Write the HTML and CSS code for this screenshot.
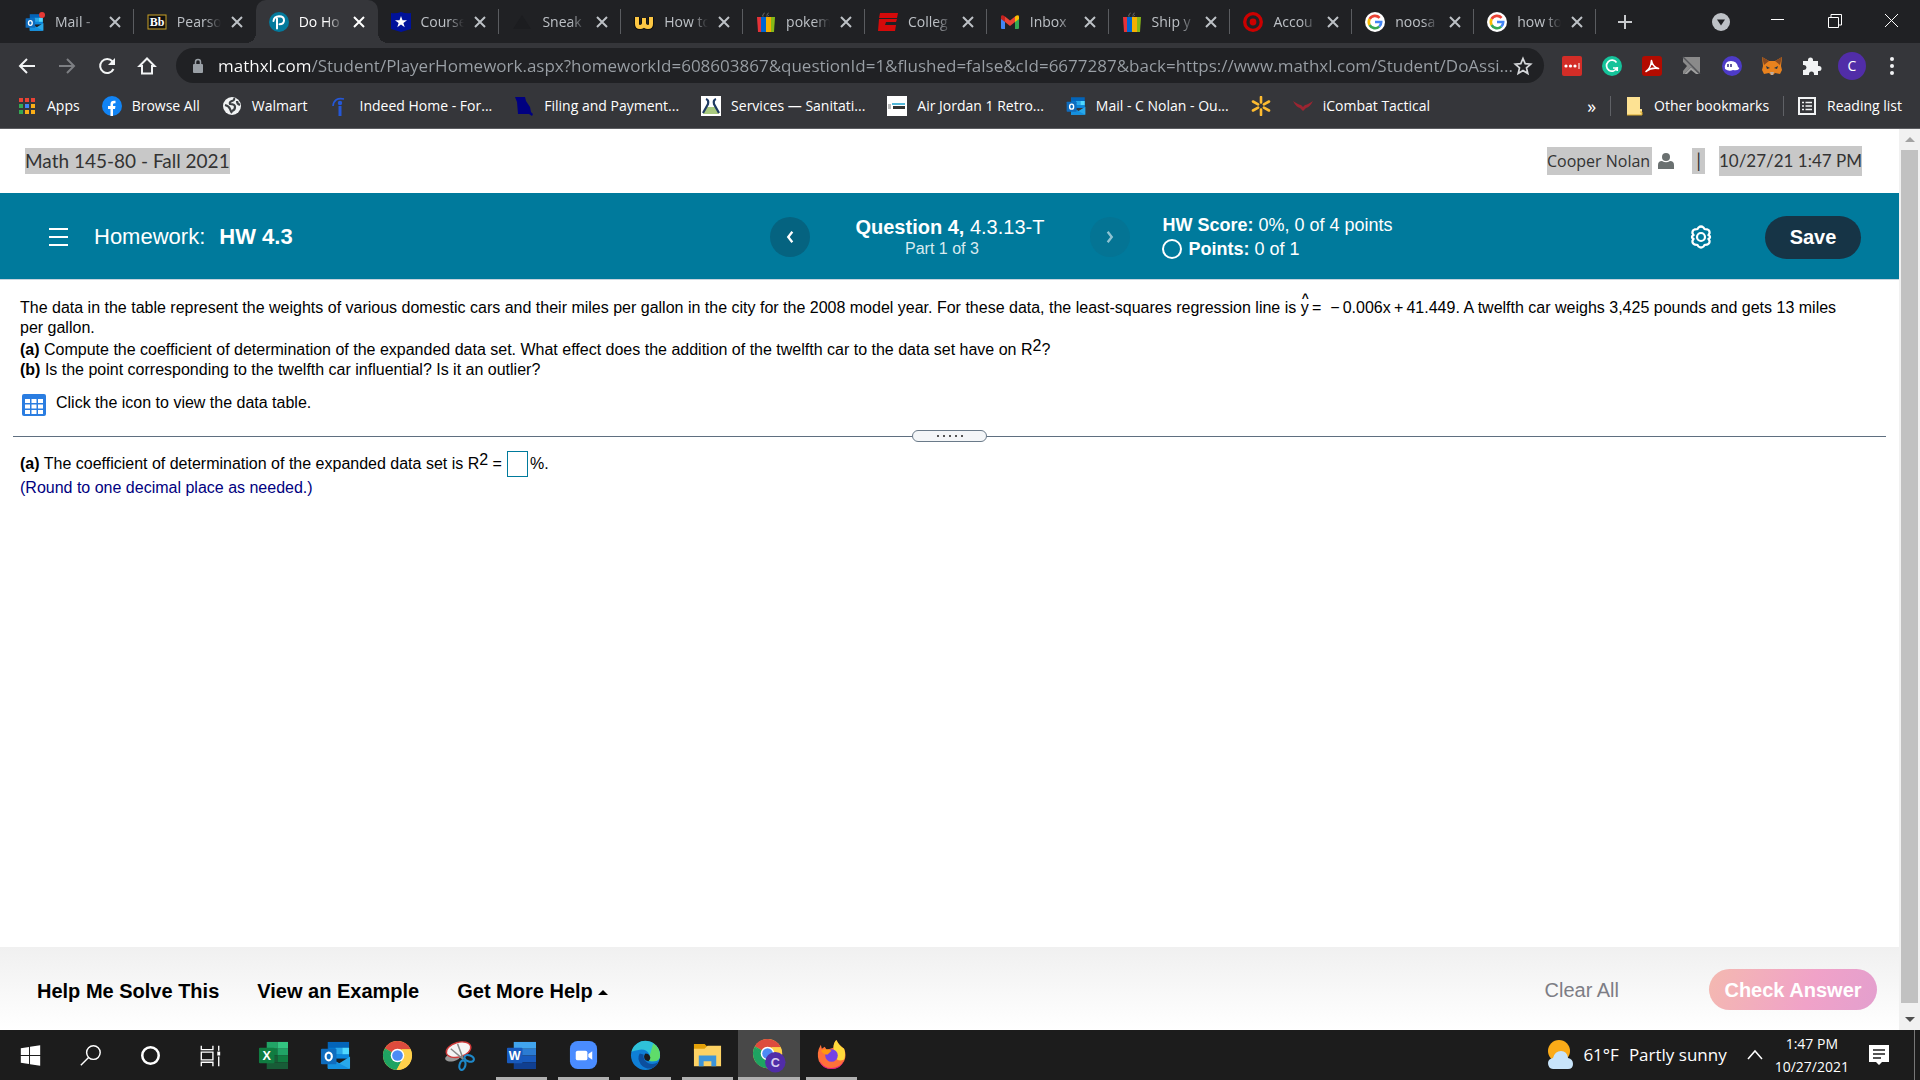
FILE: index.html
```
<!DOCTYPE html>
<html lang="en">
<head>
    <meta charset="UTF-8">
    <title>Do Homework - HW 4.3</title>
    <link rel="stylesheet" href="styles.css">
</head>
<body>

<!-- shared icons -->
<svg class="sprite" aria-hidden="true">
    <symbol id="i-close" viewBox="0 0 16 16">
        <path d="M3 3l10 10M13 3L3 13" fill="none" stroke="currentColor" stroke-width="2"/>
    </symbol>
    <symbol id="i-outlook" viewBox="0 0 32 32">
        <path d="M8 2h22v17H8z" fill="#0364b8"/>
        <path d="M9 8h7v9H9z" fill="#0078d4"/>
        <path d="M16 8h7v7h-7z" fill="#28a8ea"/>
        <path d="M23 8h7v7h-7z" fill="#50d9ff"/>
        <path d="M16 15h14v4H16z" fill="#0a87dc"/>
        <path d="M8 18l12 6 11-7v12q0 1-1 1H9q-1 0-1-1z" fill="#28a8ea"/>
        <path d="M8 18l23 12H9q-1 0-1-1z" fill="#1490df"/>
        <rect x="1" y="9" width="16" height="16" rx="1" fill="#0f6cbd"/>
        <ellipse cx="9" cy="17" rx="3.2" ry="4" fill="none" stroke="#fff" stroke-width="2.2"/>
    </symbol>
    <symbol id="i-ebay" viewBox="0 0 20 20">
        <path d="M7 6V3q0-2 2-2M11 6V3q0-2 2-2M6 4l2-2M13 4l-2-2" fill="none" stroke="#555" stroke-width="1"/>
        <path d="M1 5h5v15H2z" fill="#e53238"/>
        <path d="M5 5h5v15H5z" fill="#0064d2"/>
        <path d="M10 5h5v15h-5z" fill="#f5af02"/>
        <path d="M15 5h4l-1 15h-3z" fill="#86b817"/>
    </symbol>
    <symbol id="i-google" viewBox="0 0 20 20">
        <circle cx="10" cy="10" r="10" fill="#fff"/>
        <g fill="none" stroke-width="2.6">
            <path d="M14.6 5.9A6.2 6.2 0 0 0 4.6 7" stroke="#ea4335"/>
            <path d="M4.6 7a6.2 6.2 0 0 0 0 6" stroke="#fbbc05"/>
            <path d="M4.6 13a6.2 6.2 0 0 0 9.6 1.6" stroke="#34a853"/>
            <path d="M14.2 14.6A6 6 0 0 0 16.2 10H10" stroke="#4285f4"/>
        </g>
    </symbol>
    <symbol id="i-chrome" viewBox="0 0 32 32">
        <circle cx="16" cy="16" r="15" fill="#fbc940"/>
        <path d="M16 16L3 8.5A15 15 0 0 1 29.5 9.5H16z" fill="#dd4b3e"/>
        <path d="M3 8.5A15 15 0 0 0 15 31l6-11-5-4-5 3z" fill="#1ea362"/>
        <path d="M3 8.5L10.5 20 16 16z" fill="#1ea362"/>
        <path d="M29.5 9.5A15 15 0 0 1 15 31l6.5-12-1-9.5z" fill="#ffd04b"/>
        <circle cx="16" cy="16" r="7" fill="#fff"/>
        <circle cx="16" cy="16" r="5.5" fill="#4c8bf5"/>
    </symbol>
</svg>

<header class="browser">
    <div class="tab-strip">
        <nav class="tabs" aria-label="Open tabs">
            <div class="tab">
                <svg class="favicon" viewBox="0 0 20 20"><use href="#i-outlook" y="1" width="19" height="19"/><circle cx="17" cy="3" r="3" fill="#e53935"/></svg>
                <a class="tab-title" href="#">Mail -</a>
                <button class="tab-close" aria-label="Close tab"><svg><use href="#i-close"/></svg></button>
            </div>
            <div class="tab next-active">
                <svg class="favicon" viewBox="0 0 20 20">
                    <rect x="1" y="3" width="18" height="14" fill="#111" stroke="#c9a227"/>
                    <text x="10" y="14" text-anchor="middle" class="bb-mark">Bb</text>
                </svg>
                <a class="tab-title" href="#">Pearso</a>
                <button class="tab-close" aria-label="Close tab"><svg><use href="#i-close"/></svg></button>
            </div>
            <div class="tab active">
                <svg class="favicon" viewBox="0 0 20 20">
                    <circle cx="10" cy="10" r="10" fill="#047a9c"/>
                    <path d="M8 16.5V6.5M4.5 9Q5 4.5 10 4.2q5 0 5 4t-4.5 4" fill="none" stroke="#fff" stroke-width="2" stroke-linecap="round"/>
                </svg>
                <a class="tab-title" href="#">Do Ho</a>
                <button class="tab-close" aria-label="Close tab"><svg><use href="#i-close"/></svg></button>
            </div>
            <div class="tab">
                <svg class="favicon" viewBox="0 0 20 20">
                    <path d="M0 1q5 1 10-1 5 2 10 1v16l-10 3-10-3z" fill="#00129a"/>
                    <path d="M10 4l1.5 4.2H16l-3.6 2.7 1.3 4.3L10 12.6l-3.7 2.6 1.3-4.3L4 8.2h4.5z" fill="#fff"/>
                </svg>
                <a class="tab-title" href="#">Course</a>
                <button class="tab-close" aria-label="Close tab"><svg><use href="#i-close"/></svg></button>
            </div>
            <div class="tab">
                <svg class="favicon" viewBox="0 0 20 20"><path d="M1 17L10 3l9 14z" fill="#1c1d20"/></svg>
                <a class="tab-title" href="#">Sneak</a>
                <button class="tab-close" aria-label="Close tab"><svg><use href="#i-close"/></svg></button>
            </div>
            <div class="tab">
                <svg class="favicon" viewBox="0 0 20 20">
                    <path d="M3 5v7q0 3 3 3t4-3V6v6q1 3 4 3t3-3V5" fill="none" stroke="#111" stroke-width="6"/>
                    <path d="M3 5v7q0 3 3 3t4-3V6v6q1 3 4 3t3-3V5" fill="none" stroke="#fdc743" stroke-width="4"/>
                </svg>
                <a class="tab-title" href="#">How to</a>
                <button class="tab-close" aria-label="Close tab"><svg><use href="#i-close"/></svg></button>
            </div>
            <div class="tab">
                <svg class="favicon"><use href="#i-ebay"/></svg>
                <a class="tab-title" href="#">pokem</a>
                <button class="tab-close" aria-label="Close tab"><svg><use href="#i-close"/></svg></button>
            </div>
            <div class="tab">
                <svg class="favicon" viewBox="0 0 20 20">
                    <path d="M2 1h18l-1 5H1zM1 7h18l-1 3H8l-1 3h11l-1 6H0z" fill="#d50a0a"/>
                </svg>
                <a class="tab-title" href="#">Colleg</a>
                <button class="tab-close" aria-label="Close tab"><svg><use href="#i-close"/></svg></button>
            </div>
            <div class="tab">
                <svg class="favicon" viewBox="0 0 20 20">
                    <path d="M1 6l4 3v8H2q-1 0-1-1z" fill="#4285f4"/>
                    <path d="M15 9l4-3v10q0 1-1 1h-3z" fill="#34a853"/>
                    <path d="M5 4.5l5 4 5-4V10l-5 4-5-4z" fill="#ea4335"/>
                    <path d="M1 6V4.5Q1.5 1.8 5 4.5V10L1 7z" fill="#c5221f"/>
                    <path d="M19 6V4.5Q18.5 1.8 15 4.5V10l4-3z" fill="#fbbc04"/>
                </svg>
                <a class="tab-title" href="#">Inbox</a>
                <button class="tab-close" aria-label="Close tab"><svg><use href="#i-close"/></svg></button>
            </div>
            <div class="tab">
                <svg class="favicon"><use href="#i-ebay"/></svg>
                <a class="tab-title" href="#">Ship y</a>
                <button class="tab-close" aria-label="Close tab"><svg><use href="#i-close"/></svg></button>
            </div>
            <div class="tab">
                <svg class="favicon" viewBox="0 0 20 20">
                    <circle cx="10" cy="10" r="8.3" fill="none" stroke="#cc0000" stroke-width="3.3"/>
                    <circle cx="10" cy="10" r="3.4" fill="#cc0000"/>
                </svg>
                <a class="tab-title" href="#">Accou</a>
                <button class="tab-close" aria-label="Close tab"><svg><use href="#i-close"/></svg></button>
            </div>
            <div class="tab">
                <svg class="favicon"><use href="#i-google"/></svg>
                <a class="tab-title" href="#">noosa</a>
                <button class="tab-close" aria-label="Close tab"><svg><use href="#i-close"/></svg></button>
            </div>
            <div class="tab">
                <svg class="favicon"><use href="#i-google"/></svg>
                <a class="tab-title" href="#">how to</a>
                <button class="tab-close" aria-label="Close tab"><svg><use href="#i-close"/></svg></button>
            </div>
        </nav>
        <button class="new-tab" aria-label="New tab">
            <svg viewBox="0 0 16 16"><path d="M8 1v14M1 8h14" stroke="#c8cacd" stroke-width="2"/></svg>
        </button>
        <div class="window-controls">
            <button aria-label="Search tabs">
                <svg viewBox="0 0 18 18"><circle cx="9" cy="9" r="9" fill="#bdc1c6"/><path d="M5 6.5h8L9 12.5z" fill="#202124"/></svg>
            </button>
            <button aria-label="Minimize">
                <svg viewBox="0 0 18 18"><path d="M2 6.5h13" stroke="#fff"/></svg>
            </button>
            <button aria-label="Restore">
                <svg viewBox="0 0 18 18"><path d="M2.5 4.5h10v10h-10zM5 4V1.5h10.5V12H13" fill="none" stroke="#fff"/></svg>
            </button>
            <button aria-label="Close">
                <svg viewBox="0 0 18 18"><path d="M2 1l13 13M15 1L2 14" stroke="#fff"/></svg>
            </button>
        </div>
    </div>

    <div class="toolbar">
        <div class="nav-buttons">
            <button aria-label="Back"><svg viewBox="0 0 20 20"><path d="M18 10H3M10 3l-7 7 7 7" fill="none" stroke="#f1f3f4" stroke-width="2"/></svg></button>
            <button aria-label="Forward"><svg viewBox="0 0 20 20"><path d="M2 10h15M10 3l7 7-7 7" fill="none" stroke="#7d7f83" stroke-width="2"/></svg></button>
            <button aria-label="Reload"><svg viewBox="0 0 20 20"><path d="M16.5 13A7 7 0 1 1 15.5 5.5" fill="none" stroke="#f1f3f4" stroke-width="2"/><path d="M18 2v7h-7z" fill="#f1f3f4"/></svg></button>
            <button aria-label="Home"><svg viewBox="0 0 20 20"><path d="M5 17.5V10H2.5L10 2.5 17.5 10H15v7.5z" fill="none" stroke="#f1f3f4" stroke-width="2"/></svg></button>
        </div>
        <div class="address-bar">
            <svg class="lock" viewBox="0 0 12 16"><rect x="1" y="6" width="10" height="9" rx="1" fill="#9aa0a6"/><path d="M3.5 7V4a2.5 2.5 0 0 1 5 0v3" fill="none" stroke="#9aa0a6" stroke-width="1.5"/></svg>
            <input class="url" type="text" aria-label="Address" value="mathxl.com/Student/PlayerHomework.aspx?homeworkId=608603867&amp;questionId=1&amp;flushed=false&amp;cId=6677287&amp;back=https://www.mathxl.com/Student/DoAssi...">
            <button class="star" aria-label="Bookmark this tab">
                <svg viewBox="0 0 20 20"><path d="M10 2.5l2.2 5.2 5.5.5-4.2 3.7 1.3 5.6-4.8-3-4.8 3 1.3-5.6L2.3 8.2l5.5-.5z" fill="none" stroke="#d5d7da" stroke-width="1.7"/></svg>
            </button>
        </div>
        <div class="extensions">
            <button aria-label="LastPass"><svg viewBox="0 0 20 20"><rect width="20" height="20" rx="2" fill="#d32d27"/><g fill="#fff"><circle cx="4" cy="10" r="1.6"/><circle cx="8.5" cy="10" r="1.6"/><circle cx="13" cy="10" r="1.6"/><path d="M16.5 7h1v6h-1z"/></g></svg></button>
            <button aria-label="Grammarly"><svg viewBox="0 0 20 20"><circle cx="10" cy="10" r="10" fill="#15c39a"/><path d="M14.5 6.5A5.5 5.5 0 1 0 15 12h-4M15.2 11v4" fill="none" stroke="#fff" stroke-width="1.7"/></svg></button>
            <button aria-label="Adobe Acrobat"><svg viewBox="0 0 20 20"><rect width="20" height="20" rx="3" fill="#b30b00"/><path d="M4 15.5Q9 12 9.5 4.5q1 6.5 7 8-7-1.5-12.5 3z" fill="none" stroke="#fff" stroke-width="1.6" stroke-linejoin="round"/></svg></button>
            <button aria-label="Extension"><svg viewBox="0 0 20 20"><path d="M1 1h17v17H1z" fill="#8a8a8a"/><path d="M1 1l17 17" stroke="#55565a" stroke-width="1.5"/><path d="M1 6l4 4-4 5zM1 19l8-8 10 8z" fill="#35363a"/><path d="M2 18l7-7 8 7-3 0-5-4-4 4z" fill="#a0a0a0"/></svg></button>
            <button aria-label="Phantom"><svg viewBox="0 0 20 20"><circle cx="10" cy="10" r="10" fill="#4e3bc8"/><path d="M3 13q-1-8 6-8 6 0 7 6 2 1 1 2-2 2-6 1-4 2-8-1z" fill="#fff"/><path d="M6 8v3M9 8v3" stroke="#352a80" stroke-width="1.5"/></svg></button>
            <button aria-label="MetaMask"><svg viewBox="0 0 20 20"><path d="M0 1l7 4h6l7-4-1 9 1 4-2 4-5-1-2 2H9l-2-2-5 1-2-4 1-4z" fill="#e8821e"/><path d="M0 1l7 4-5 4zM20 1l-7 4 5 4z" fill="#8a4b20"/><path d="M4 10l4 2-3 1zM16 10l-4 2 3 1z" fill="#233447"/><path d="M8 16h4l-1 3H9z" fill="#c0ad9e"/></svg></button>
            <button aria-label="Extensions"><svg viewBox="0 0 20 20"><path d="M1 5h5V4a2.5 2.5 0 0 1 5 0v1h5v5h1a2.5 2.5 0 0 1 0 5h-1v4h-4v-1a2.5 2.5 0 0 0-5 0v1H1v-5h1a2.5 2.5 0 0 0 0-5H1z" fill="#f1f3f4"/></svg></button>
            <button class="avatar" aria-label="Profile">C</button>
            <button aria-label="Menu"><svg viewBox="0 0 20 20"><g fill="#f1f3f4"><circle cx="10" cy="3" r="2"/><circle cx="10" cy="10" r="2"/><circle cx="10" cy="17" r="2"/></g></svg></button>
        </div>
    </div>

    <nav class="bookmarks" aria-label="Bookmarks">
        <a class="bookmark" href="#">
            <svg viewBox="0 0 20 20"><g fill="#ea4335"><path d="M2 2h4v4H2zM8 2h4v4H8zM14 2h4v4h-4z"/></g><path d="M2 8h4v4H2zM2 14h4v4H2z" fill="#34a853"/><path d="M8 8h4v4H8z" fill="#4285f4"/><path d="M14 8h4v4h-4zM8 14h4v4H8zM14 14h4v4h-4z" fill="#fbae17"/></svg>
            <span>Apps</span>
        </a>
        <a class="bookmark" href="#">
            <svg viewBox="0 0 20 20"><circle cx="10" cy="10" r="10" fill="#1184f5"/><path d="M8.5 20v-7H6v-3h2.5V8q0-4 5-3.2v2.4q-2.5-.3-2.5 1.3V10h2.5l-.5 3h-2v7z" fill="#fff"/></svg>
            <span>Browse All</span>
        </a>
        <a class="bookmark" href="#">
            <svg viewBox="0 0 20 20"><circle cx="10" cy="10" r="9" fill="#f1f3f4"/><path d="M12 2q1 2-2 3T8 8q5 0 5 3t-3 4M3 9q4 1 5 4t2 4M15 5q0 3 3 4" fill="none" stroke="#3c4043" stroke-width="2.2"/></svg>
            <span>Walmart</span>
        </a>
        <a class="bookmark" href="#">
            <svg viewBox="0 0 20 20"><path d="M3 10Q4 1 14 3" fill="none" stroke="#2557d6" stroke-width="1.7"/><circle cx="10" cy="7" r="2.2" fill="#2557d6"/><path d="M8.5 10h3v10h-3z" fill="#2557d6"/></svg>
            <span>Indeed Home - For...</span>
        </a>
        <a class="bookmark" href="#">
            <svg viewBox="0 0 20 20"><path d="M1 1h10l1 4 4 6 1 5 2 2-1 2-3-2H4L3 6z" fill="#000080"/></svg>
            <span>Filing and Payment...</span>
        </a>
        <a class="bookmark" href="#">
            <svg viewBox="0 0 20 20"><path d="M0 0h20v20H0z" fill="#fff"/><path d="M6 11h8l4 7H2z" fill="#a8c97f"/><path d="M5 3q3 1 2 5L2 17M15 3q-3 1-2 5l5 9" fill="none" stroke="#1f3b63" stroke-width="2.2"/></svg>
            <span>Services — Sanitati...</span>
        </a>
        <a class="bookmark" href="#">
            <svg viewBox="0 0 20 20"><path d="M0 0h20v20H0z" fill="#fff"/><path d="M5 7h13v2H5z" fill="#53b7d8"/><path d="M6 10h12v3H6z" fill="#333"/><path d="M1 8h3v5H1z" fill="#bbb"/></svg>
            <span>Air Jordan 1 Retro...</span>
        </a>
        <a class="bookmark" href="#">
            <svg><use href="#i-outlook"/></svg>
            <span>Mail - C Nolan - Ou...</span>
        </a>
        <a class="bookmark" href="#" aria-label="Walmart">
            <svg viewBox="0 0 20 20"><path d="M10 1v5.5M10 13.5V19M2 5.5l5.1 2.8M12.9 11.7l5.1 2.8M2 14.5l5.1-2.8M12.9 8.3L18 5.5" stroke="#fdbb30" stroke-width="2.6" stroke-linecap="round"/></svg>
        </a>
        <a class="bookmark" href="#">
            <svg viewBox="0 0 20 20"><path d="M0 5q6 4 8 4l2 2 2-2q2 0 8-4-3 6-7 7l-3 3-3-3Q3 11 0 5z" fill="#9c2531"/></svg>
            <span>iCombat Tactical</span>
        </a>
        <div class="bookmarks-end">
            <button class="more" aria-label="More bookmarks">»</button>
            <a class="bookmark divided" href="#">
                <svg viewBox="0 0 20 20"><path d="M3 1h13v12h2v6H3z" fill="#fde293"/><path d="M3 19h15v-3h-2" fill="none" stroke="#d9a92b" stroke-width="1"/></svg>
                <span>Other bookmarks</span>
            </a>
            <a class="bookmark divided" href="#">
                <svg viewBox="0 0 20 20"><path d="M2 2h16v16H2z" fill="none" stroke="#f1f3f4" stroke-width="2"/><path d="M5 6.5h2M8.5 6.5H15M5 10h2M8.5 10H15M5 13.5h2M8.5 13.5H15" stroke="#f1f3f4" stroke-width="1.7"/></svg>
                <span>Reading list</span>
            </a>
        </div>
    </nav>
</header>

<div class="viewport">
    <div class="page">
        <div class="course-bar">
            <span class="course-name selected">Math 145-80 - Fall 2021</span>
            <div class="account">
                <span class="user-name selected">Cooper Nolan</span>
                <svg class="user-icon" viewBox="0 0 16 16"><circle cx="8" cy="4" r="4" fill="#6a7070"/><path d="M0 16v-4q0-4 4-4 4 2.5 8 0 4 0 4 4v4z" fill="#6a7070"/></svg>
                <span class="bar selected">|</span>
                <span class="date selected">10/27/21 1:47 PM</span>
            </div>
        </div>

        <div class="hw-header">
            <div class="hw-title">
                <button class="menu-button" aria-label="Menu"><span></span><span></span><span></span></button>
                <h1>Homework: <b>HW 4.3</b></h1>
            </div>
            <div class="question-nav">
                <button class="round-button" aria-label="Previous question">
                    <svg viewBox="0 0 12 12"><path d="M8 1.5L4.5 6 8 10.5" fill="none" stroke="currentColor" stroke-width="2"/></svg>
                </button>
                <div class="question-name">
                    <div class="question-id"><b>Question 4,</b> 4.3.13-T</div>
                    <div class="question-part">Part 1 of 3</div>
                </div>
                <button class="round-button" disabled aria-label="Next question">
                    <svg viewBox="0 0 12 12"><path d="M4 1.5L7.5 6 4 10.5" fill="none" stroke="currentColor" stroke-width="2"/></svg>
                </button>
                <div class="score">
                    <div><b>HW Score:</b> 0%, 0 of 4 points</div>
                    <div class="points"><i class="ring"></i><span><b>Points:</b> 0 of 1</span></div>
                </div>
            </div>
            <div class="hw-actions">
                <button class="gear" aria-label="Settings">
                    <svg viewBox="0 0 24 24"><path d="M9.5 2.5Q12 .5 14.5 2.5l1 1.5 2.5.3q3 1 2.5 4l-1 1.7 1 .8q1 1.2 0 2.4l-1 .8 1 1.7q.5 3-2.5 4l-2.5.3-1 1.5q-2.5 2-5 0l-1-1.5-2.5-.3q-3-1-2.5-4l1-1.7-1-.8q-1-1.2 0-2.4l1-.8-1-1.7q-.5-3 2.5-4L8.5 4z" fill="none" stroke="#fff" stroke-width="2.2"/><circle cx="12" cy="12" r="4" fill="none" stroke="#fff" stroke-width="2.2"/></svg>
                </button>
                <button class="save">Save</button>
            </div>
        </div>

        <main class="question">
            <p>The data in the table represent the weights of various domestic cars and their miles per gallon in the city for the 2008 model year. For these data, the least-squares regression line is <span class="hat">y</span>&thinsp;=&nbsp; −&thinsp;0.006x&thinsp;+&thinsp;41.449. A twelfth car weighs 3,425 pounds and gets 13 miles per gallon.</p>
            <p class="part"><b>(a)</b> Compute the coefficient of determination of the expanded data set. What effect does the addition of the twelfth car to the data set have on R<sup>2</sup>?</p>
            <p><b>(b)</b> Is the point corresponding to the twelfth car influential? Is it an outlier?</p>
            <button class="data-link">
                <svg viewBox="0 0 24 22"><rect width="24" height="22" rx="2" fill="#2a7de1"/><g fill="#fff"><path d="M3 5h5v4H3zM9.5 5h5v4h-5zM16 5h5v4h-5zM3 10.5h5v4H3zM9.5 10.5h5v4h-5zM16 10.5h5v4h-5zM3 16h5v4H3zM9.5 16h5v4h-5zM16 16h5v4h-5z"/></g></svg>
                <span>Click the icon to view the data table.</span>
            </button>

            <div class="splitter">
                <button class="handle" aria-label="Resize"><i></i><i></i><i></i><i></i><i></i></button>
            </div>

            <div class="answer-line">
                <label for="answer"><b>(a)</b> The coefficient of determination of the expanded data set is R<sup>2</sup> =</label>
                <input class="answer" id="answer" type="text">
                <span>%.</span>
            </div>
            <p class="hint">(Round to one decimal place as needed.)</p>
        </main>

        <footer class="help-bar">
            <div class="help-links">
                <button>Help Me Solve This</button>
                <button>View an Example</button>
                <button>Get More Help <i class="caret"></i></button>
            </div>
            <div class="submit">
                <button class="clear" disabled>Clear All</button>
                <button class="check" disabled>Check Answer</button>
            </div>
        </footer>
    </div>
    <div class="scrollbar">
        <i class="arrow up"></i>
        <div class="thumb"></div>
        <i class="arrow down"></i>
    </div>
</div>

<div class="taskbar">
    <div class="apps">
        <div class="system">
            <button class="app" aria-label="Start"><svg viewBox="0 0 32 32"><path d="M6 8.5l8.5-1.3v8.3H6zM15.5 7L26 5.5v10H15.5zM6 16.5h8.5v8.3L6 23.5zM15.5 16.5H26v10L15.5 25z" fill="#fff"/></svg></button>
            <button class="app" aria-label="Search"><svg viewBox="0 0 32 32"><circle cx="19" cy="13" r="7" fill="none" stroke="#fff" stroke-width="1.5"/><path d="M14 18l-8 8" stroke="#fff" stroke-width="1.5"/></svg></button>
            <button class="app" aria-label="Cortana"><svg viewBox="0 0 32 32"><circle cx="16" cy="16" r="8.5" fill="none" stroke="#fff" stroke-width="2.6"/></svg></button>
            <button class="app" aria-label="Task view"><svg viewBox="0 0 32 32"><path d="M6.5 6v4h12V6M6.5 12.5h12v8h-12zM6.5 27v-4h12v4M24.5 6v5M24.5 17v10" fill="none" stroke="#fff" stroke-width="1.4"/><path d="M23 12h3v4h-3z" fill="#fff"/></svg></button>
        </div>
        <button class="app" aria-label="Excel"><svg viewBox="0 0 32 32"><path d="M9 2h11v7H9z" fill="#21a366"/><path d="M20 2h11v7H20z" fill="#33c481"/><path d="M9 9h11v7H9z" fill="#107c41"/><path d="M20 9h11v7H20z" fill="#21a366"/><path d="M9 16h11v7H9z" fill="#185c37"/><path d="M20 16h11v7H20z" fill="#107c41"/><path d="M9 23h22v7H9z" fill="#185c37"/><rect x="1" y="8" width="16" height="16" rx="1" fill="#107c41"/><text class="app-letter" x="9" y="21" text-anchor="middle">X</text></svg></button>
        <button class="app" aria-label="Outlook"><svg><use href="#i-outlook"/></svg></button>
        <button class="app" aria-label="Chrome"><svg><use href="#i-chrome"/></svg></button>
        <button class="app" aria-label="Snip"><svg viewBox="0 0 32 32"><ellipse cx="9" cy="18" rx="8" ry="4" transform="rotate(-12 9 18)" fill="#999"/><ellipse cx="15" cy="10" rx="13" ry="7.5" transform="rotate(-16 15 10)" fill="#f4f4f4" stroke="#d03a3a" stroke-width="1.5"/><path d="M14 4l6 16M7 9l13 11" stroke="#888" stroke-width="1.5"/><g fill="none" stroke="#1e88c9" stroke-width="2.2"><ellipse cx="26" cy="19" rx="5" ry="3.2" transform="rotate(20 26 19)"/><ellipse cx="19" cy="26" rx="3" ry="5" transform="rotate(15 19 26)"/></g></svg></button>
        <button class="app open" aria-label="Word"><svg viewBox="0 0 32 32"><path d="M8 2h23v7H8z" fill="#41a5ee"/><path d="M8 9h23v7H8z" fill="#2b7cd3"/><path d="M8 16h23v7H8z" fill="#185abd"/><path d="M8 23h23v7H8z" fill="#103f91"/><rect x="1" y="8" width="16" height="16" rx="1" fill="#185abd"/><text class="app-letter" x="9" y="21" text-anchor="middle">W</text></svg></button>
        <button class="app open" aria-label="Zoom"><svg viewBox="0 0 32 32"><rect x="2" y="1" width="28" height="29" rx="8" fill="#4a8cff"/><rect x="8" y="11" width="12" height="10" rx="2" fill="#fff"/><path d="M21 14.5l4-3v9l-4-3z" fill="#fff"/></svg></button>
        <button class="app open" aria-label="Edge"><svg viewBox="0 0 32 32"><circle cx="16" cy="16" r="15" fill="#0f7fd6"/><path d="M1.5 12A15 15 0 0 1 31 16q0 6-7 6-5 0-5-2 2-2 1-5-3-6-10-5-6 1-8.5 2z" fill="#2fc1d8"/><path d="M24 3.5A15 15 0 0 1 31 16q0 6-7 6-5 0-5-2 2-1.5 1.5-4.5z" fill="#5fdc6a"/><path d="M10 14q-3 5 1 11 4 5 11 4.5Q28 27 29 23q-5 3-10 1-6-3-5-9z" fill="#0c4f9e"/><path d="M16 14q-3 3 0 7l3 1q2-2 2-4-1-4-5-4z" fill="#1c1c1c"/></svg></button>
        <button class="app open" aria-label="File Explorer"><svg viewBox="0 0 32 32"><path d="M2 4h11l3 3v4H2z" fill="#e3a008"/><path d="M2 9h11l3-3h14v21H2z" fill="#fdd264"/><path d="M7 27V16h18v11h-5v-5h-8v5z" fill="#3d95da"/></svg></button>
        <button class="app open current" aria-label="Chrome"><svg viewBox="0 0 36 36"><use href="#i-chrome" width="32" height="32"/><circle cx="24" cy="25" r="10.5" fill="#512da8"/><text class="profile-letter" x="24" y="30" text-anchor="middle">C</text></svg></button>
        <button class="app open" aria-label="Firefox"><svg viewBox="0 0 32 32"><path d="M5 5l1 4 3-2 2 3 7-2q0-5 3-8 3 6 8 9 3 7 0 13-5 8-13 8T3 22Q0 13 5 5z" fill="#ff7139"/><path d="M18 8q0-5 3-8 3 6 8 9 2 6 0 11-6 3-9-2z" fill="#ffd93b"/><path d="M3 20q4 9 13 9t13-8q-3 9-13 9T3 20z" fill="#e31587"/><circle cx="16" cy="16" r="6.5" fill="#7542e5"/><path d="M5 11q6-3 11 0l-4 4q-4 0-7-4z" fill="#ff980e"/></svg></button>
    </div>
    <div class="tray">
        <button class="weather">
            <svg viewBox="0 0 26 30"><circle cx="12" cy="11" r="11" fill="#fbab18"/><path d="M6 29q-5-.5-5-6 0-4 5-5 2-7 8-7t7 7q5 1 5 6 0 5-5 5z" fill="#c8e4fa"/></svg>
            <span>61°F</span>
            <span>Partly sunny</span>
        </button>
        <button class="chevron" aria-label="Show hidden icons"><svg viewBox="0 0 16 16"><path d="M1 12l7-8 7 8" fill="none" stroke="#fff" stroke-width="1.5"/></svg></button>
        <button class="clock"><span>1:47 PM</span><span>10/27/2021</span></button>
        <button class="notifications" aria-label="Notifications"><svg viewBox="0 0 20 20"><path d="M0 0h20v17h-7l-3 3-3-3H0z" fill="#fff"/><path d="M4 5h12M4 9h12M4 13h8" stroke="#1c1c1c" stroke-width="1.3"/></svg></button>
        <div class="show-desktop"></div>
    </div>
</div>

</body>
</html>
```
FILE: styles.css
```
* {
    box-sizing: border-box;
}

body {
    margin: 0;
    height: 100vh;
    display: flex;
    flex-direction: column;
    overflow: hidden;
    font: 16px/20px "Liberation Sans", Arial, sans-serif;
    color: #000;
}

button {
    padding: 0;
    border: none;
    background: none;
    font: inherit;
    color: inherit;
}

svg {
    display: block;
}

a {
    color: inherit;
    text-decoration: none;
}

h1, p {
    margin: 0;
    font-weight: normal;
}

.sprite {
    position: absolute;
    width: 0;
    height: 0;
}

/* browser chrome */
.browser {
    background: #35363a;
    color: #fff;
    font: 14px/20px "Open Sans", "Noto Sans", sans-serif;
    border-bottom: 1px solid #5c5d61;
}

.tab-strip {
    display: flex;
    height: 43px;
    padding-left: 12px;
    background: #202124;
}

.tabs {
    display: flex;
    flex: 1;
    min-width: 0;
}

.tab {
    position: relative;
    flex: 1;
    min-width: 0;
    display: flex;
    align-items: center;
    gap: 8px;
    padding: 0 11px 0 13px;
    color: #bdc1c6;
}

.tab::after {
    content: "";
    position: absolute;
    right: 0;
    top: 9px;
    width: 1px;
    height: 25px;
    background: #5a5c60;
}

.tab.next-active::after {
    display: none;
}

.tab.active {
    background: #35363a;
    color: #fff;
    border-radius: 10px 10px 0 0;
}

.tab.active::before,
.tab.active::after {
    content: "";
    position: absolute;
    top: auto;
    bottom: 0;
    width: 10px;
    height: 10px;
}

.tab.active::before {
    left: -10px;
    background: radial-gradient(circle at 0 0, transparent 10px, #35363a 10px);
}

.tab.active::after {
    right: -10px;
    background: radial-gradient(circle at 100% 0, transparent 10px, #35363a 10px);
}

.favicon {
    width: 20px;
    height: 20px;
    flex: none;
}

.bb-mark {
    font: bold 12px "Liberation Serif", serif;
    fill: #fff;
}

.tab-title {
    flex: 1;
    min-width: 0;
    padding-left: 2px;
    white-space: nowrap;
    mask-image: linear-gradient(to left, transparent, #000 16px);
}

.tab-close,
.tab-close svg {
    width: 16px;
    height: 16px;
}

.new-tab {
    width: 58px;
    display: grid;
    place-items: center;
}

.new-tab svg {
    width: 16px;
    height: 16px;
}

.window-controls {
    display: flex;
    margin-left: 38px;
}

.window-controls button {
    width: 57px;
    display: grid;
    place-items: center;
}

.window-controls svg {
    width: 18px;
    height: 18px;
}

.toolbar {
    display: flex;
    align-items: center;
    height: 45px;
    padding: 0 18px 0 17px;
}

.nav-buttons {
    display: flex;
    gap: 20px;
}

.nav-buttons svg,
.star svg,
.extensions svg {
    width: 20px;
    height: 20px;
}

.address-bar {
    flex: 1;
    display: flex;
    align-items: center;
    height: 35px;
    margin-left: 19px;
    padding: 0 11px 0 16px;
    border-radius: 18px;
    background: #202124;
}

.lock {
    width: 12px;
    height: 16px;
}

.url {
    flex: 1;
    min-width: 0;
    margin-left: 14px;
    padding: 0;
    border: none;
    outline: none;
    font: 17px/24px "Open Sans", "Noto Sans", sans-serif;
    /* the host is white, the rest of the url grey */
    color: transparent;
    background: linear-gradient(to right, #fff 93px, #9aa0a6 93px);
    background-clip: text;
}

.extensions {
    display: flex;
    align-items: center;
    gap: 20px;
    margin-left: 18px;
}

.avatar {
    width: 28px;
    height: 28px;
    margin: 0 -4px;
    border-radius: 50%;
    background: #512da8;
}

.bookmarks {
    display: flex;
    align-items: center;
    gap: 22px;
    height: 40px;
    padding: 0 18px 5px 17px;
}

.bookmark {
    display: flex;
    align-items: center;
    gap: 10px;
    white-space: nowrap;
}

.bookmark svg {
    width: 20px;
    height: 20px;
    flex: none;
}

.bookmarks-end {
    display: flex;
    align-items: center;
    gap: 14px;
    margin-left: auto;
}

.more {
    font-size: 18px;
}

.divided {
    padding-left: 13px;
    border-left: 1px solid #5f6166;
}

/* page */
.viewport {
    flex: 1;
    min-height: 0;
    display: flex;
}

.page {
    flex: 1;
    display: flex;
    flex-direction: column;
}

.course-bar {
    display: flex;
    justify-content: space-between;
    align-items: center;
    height: 64px;
    padding: 0 37px 0 25px;
    font: 19px/26px Lato, sans-serif;
    color: #333;
}

.selected {
    background: #c8c8c8;
}

.account {
    display: flex;
    align-items: center;
}

.user-name {
    padding-right: 2px;
    font: 16px/28px "Open Sans", sans-serif;
}

.user-icon {
    width: 16px;
    height: 16px;
    margin: 0 18px 0 6px;
}

.bar {
    padding: 0 4px;
    margin-right: 14px;
}

.date {
    font-size: 17px;
    line-height: 30px;
}

.hw-header {
    display: grid;
    grid-template-columns: 41.4% auto 1fr;
    align-items: center;
    height: 87px;
    padding: 2px 38px 0 0;
    border-bottom: 1px solid #c7d3dd;
    background: #007a9c;
    color: #fff;
}

.hw-title {
    display: flex;
    align-items: center;
    gap: 26px;
    padding-left: 49px;
}

.menu-button {
    display: grid;
    gap: 6px;
}

.menu-button span {
    width: 19px;
    height: 2px;
    background: #fff;
}

h1 {
    font-size: 22px;
    line-height: 28px;
}

h1 b {
    margin-left: 8px;
}

.question-nav {
    display: flex;
    align-items: center;
}

.round-button {
    width: 40px;
    height: 40px;
    display: grid;
    place-items: center;
    border-radius: 50%;
    background: #056380;
}

.round-button:disabled {
    background: #047494;
    color: #8fc3d2;
}

.round-button svg {
    width: 14px;
    height: 14px;
}

.question-name {
    margin: 0 46px 0 45px;
    white-space: nowrap;
}

.question-id {
    font-size: 20px;
    line-height: 24px;
}

.question-part {
    padding-right: 16px;
    text-align: center;
    color: #d9ebf0;
}

.score {
    margin-left: 32px;
    font-size: 18px;
    line-height: 24px;
    white-space: nowrap;
}

.points {
    display: flex;
    align-items: center;
    gap: 6px;
}

.ring {
    width: 20px;
    height: 20px;
    border: 2px solid #fff;
    border-radius: 50%;
}

.hw-actions {
    display: flex;
    justify-content: flex-end;
    align-items: center;
    gap: 52px;
}

.gear svg {
    width: 24px;
    height: 24px;
}

.save {
    width: 96px;
    height: 43px;
    border-radius: 22px;
    background: #163446;
    font-size: 20px;
    font-weight: bold;
}

.question {
    flex: 1;
    padding: 18px 13px 0;
}

.question p,
.answer-line {
    padding: 0 34px 0 7px;
}

sup {
    font-size: 16px;
    line-height: 0;
    vertical-align: 4px;
}

.hat {
    position: relative;
}

.hat::before {
    content: "^";
    position: absolute;
    left: 1px;
    top: -7px;
    font-weight: bold;
    font-size: 12px;
    line-height: 12px;
}

.question .part {
    margin-top: 2px;
}

.data-link {
    display: flex;
    gap: 10px;
    margin-top: 13px;
    padding-left: 9px;
}

.data-link svg {
    width: 24px;
    height: 22px;
    margin-top: 1px;
}

.splitter {
    display: flex;
    justify-content: center;
    margin-top: 14px;
    background: linear-gradient(#5f6f80, #5f6f80) center / 100% 1px no-repeat;
}

.handle {
    width: 75px;
    height: 12px;
    display: flex;
    justify-content: center;
    align-items: center;
    gap: 4px;
    border: 1px solid #6a7a89;
    border-radius: 6px;
    background: #f4f6f8;
}

.handle i {
    width: 2px;
    height: 2px;
    background: #555;
}

.answer-line {
    display: flex;
    align-items: center;
    margin-top: 9px;
}

.answer {
    width: 21px;
    height: 26px;
    margin: 0 2px 0 5px;
    padding: 0;
    border: 1px solid #007a9c;
    font: inherit;
}

.question .hint {
    margin-top: 1px;
    color: #000080;
}

.help-bar {
    display: flex;
    justify-content: space-between;
    align-items: center;
    height: 83px;
    padding: 2px 22px 0 37px;
    background: linear-gradient(#f0f0f0, #fff);
    font-size: 20px;
}

.help-links {
    display: flex;
    gap: 38px;
    padding-top: 2px;
}

.help-links button {
    font-weight: bold;
}

.caret {
    display: inline-block;
    vertical-align: 3px;
    border: 5px solid transparent;
    border-top: none;
    border-bottom-color: #000;
}

.submit {
    display: flex;
    align-items: center;
    gap: 90px;
}

.clear {
    color: #7d7d85;
}

.check {
    width: 168px;
    height: 41px;
    border-radius: 21px;
    background: linear-gradient(110deg, #f4b9b0, #f0a2c8 60%, #e39fce);
    color: #fff;
    font-weight: bold;
}

.scrollbar {
    width: 21px;
    display: flex;
    flex-direction: column;
    align-items: center;
    background: #f1f1f1;
}

.thumb {
    flex: 1;
    width: 17px;
    background: #c1c1c1;
}

.arrow {
    margin: 8px 0;
    border: 5px solid transparent;
}

.arrow.up {
    border-top: none;
    border-bottom-color: #a3a3a3;
}

.arrow.down {
    margin: 14px 0 8px;
    border-bottom: none;
    border-top-color: #505050;
}

/* taskbar */
.taskbar {
    display: flex;
    justify-content: space-between;
    height: 50px;
    background: #1c1c1c;
    color: #fff;
    font: 17px/24px "Open Sans", "Noto Sans", sans-serif;
}

.apps,
.system {
    display: flex;
}

.system {
    margin-right: 2px;
}

.app {
    width: 62px;
    display: grid;
    place-items: center;
}

.system .app {
    width: 60px;
}

.app svg {
    width: 31px;
    height: 31px;
}

.app.open {
    background: linear-gradient(#b0b0b0, #b0b0b0) bottom / 51px 3px no-repeat;
}

.app.current {
    background: linear-gradient(#b0b0b0, #b0b0b0) bottom / 100% 3px no-repeat #484848;
}

.app.current svg {
    width: 35px;
    height: 35px;
}

.app-letter {
    font: bold 13px "Liberation Sans", sans-serif;
    fill: #fff;
}

.profile-letter {
    font: bold 13px "Liberation Sans", sans-serif;
    fill: #d8cdf0;
}

.tray {
    display: flex;
    align-items: center;
}

.weather {
    display: flex;
    align-items: center;
    gap: 10px;
    white-space: nowrap;
}

.weather svg {
    width: 26px;
    height: 30px;
}

.chevron {
    margin-left: 20px;
}

.chevron svg {
    width: 16px;
    height: 16px;
}

.clock {
    display: grid;
    margin: 0 20px 0 12px;
    font-size: 14px;
    line-height: 23px;
}

.notifications svg {
    width: 20px;
    height: 20px;
}

.show-desktop {
    width: 6px;
    height: 100%;
    margin-left: 25px;
    border-left: 1px solid #777;
}
```
